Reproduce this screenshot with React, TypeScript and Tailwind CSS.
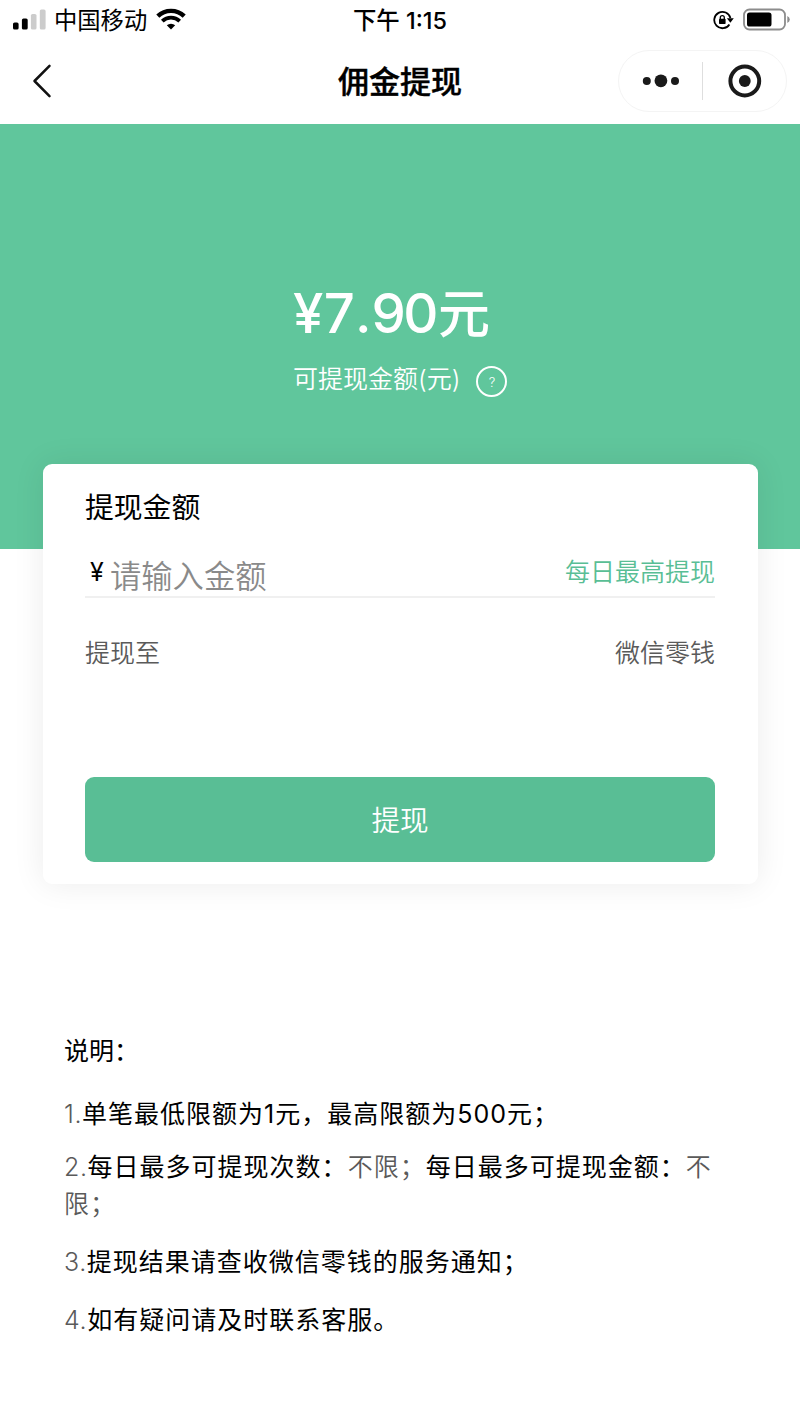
import React from 'react';

interface NotePart {
  text: string;
  muted?: boolean;
}

interface NoteData {
  index: string;
  parts: NotePart[];
  className: string;
}

const notes: NoteData[] = [
  {
    index: '1.',
    className: 'mt-[26px]',
    parts: [{ text: '单笔最低限额为1元，最高限额为500元；' }],
  },
  {
    index: '2.',
    className: 'mt-[16px]',
    parts: [
      { text: '每日最多可提现次数：' },
      { text: '不限；', muted: true },
      { text: '每日最多可提现金额：' },
      { text: '不限；', muted: true },
    ],
  },
  {
    index: '3.',
    className: 'mt-[21px]',
    parts: [{ text: '提现结果请查收微信零钱的服务通知；' }],
  },
  {
    index: '4.',
    className: 'mt-[21px]',
    parts: [{ text: '如有疑问请及时联系客服。' }],
  },
];

const StatusBar: React.FC = () => (
  <div className="grid h-10 grid-cols-3 items-center text-black">
    <div className="flex items-center pl-[12px]">
      <svg width="34" height="22" viewBox="0 0 34 22" className="shrink-0">
        <rect x="1" y="13.5" width="5.6" height="7" rx="1.6" fill="#000" />
        <rect x="9.9" y="9.5" width="5.8" height="11" rx="1.6" fill="#000" />
        <rect x="18.9" y="5" width="5.6" height="15.5" rx="1.6" fill="#ccc" />
        <rect x="27.8" y="0.5" width="5.8" height="20" rx="1.6" fill="#ccc" />
      </svg>
      <span className="ml-2 mt-[2px] text-[23.3px] leading-[38px]">中国移动</span>
      <svg width="30" height="24" viewBox="0 0 30 24" className="ml-[9px] shrink-0">
        <path d="M1.8 8.2 A19 19 0 0 1 28.2 8.2" fill="none" stroke="#000" strokeWidth="4.4" />
        <path d="M6.3 13.2 A12.6 12.6 0 0 1 23.7 13.2" fill="none" stroke="#000" strokeWidth="3.8" />
        <path d="M15 21.4 L10.8 17.2 A6.4 6.4 0 0 1 19.2 17.2 Z" fill="#000" />
      </svg>
    </div>
    <div className="mt-[2px] text-center text-[23.4px] font-medium leading-[38px]">下午 1:15</div>
    <div className="flex items-center justify-end pr-[9px]">
      <svg width="21" height="20" viewBox="0 0 21 20">
        <path d="M16.4 14.4 A8.2 8.2 0 1 1 17.4 8" fill="none" stroke="#000" strokeWidth="1.8" />
        <path d="M13.9 8.2 H20.8 L17.3 12.8 Z" fill="#000" />
        <rect x="6" y="8.8" width="6.6" height="5.2" rx="0.7" fill="#000" />
        <path d="M7.3 9 V7.6 A2 2 0 0 1 11.3 7.6 V9" fill="none" stroke="#000" strokeWidth="1.3" />
      </svg>
      <svg width="48" height="24" viewBox="0 0 48 24" className="ml-[9px]">
        <rect x="1" y="1.5" width="41" height="20" rx="5.5" fill="none" stroke="#8c8c8c" strokeWidth="1.8" />
        <rect x="4" y="4.5" width="24.5" height="14" rx="2.6" fill="#000" />
        <path d="M44.3 8.1 Q46.8 9.3 46.8 11.5 Q46.8 13.7 44.3 14.9 Z" fill="#8c8c8c" />
      </svg>
    </div>
  </div>
);

const NavBar: React.FC = () => (
  <div className="grid h-[84px] grid-cols-[180px_1fr_180px] items-center pb-[2px]">
    <svg width="20" height="34" viewBox="0 0 20 34" className="ml-8">
      <path d="M17.5 1.8 L2.5 17 L17.5 32.2" fill="none" stroke="#111" strokeWidth="2.5" strokeLinecap="round" strokeLinejoin="round" />
    </svg>
    <h1 className="pt-[2px] text-center text-[31px] font-medium leading-[80px] text-black [-webkit-text-stroke:0.4px_#000]">佣金提现</h1>
    <div className="-ml-[2px] flex h-[62px] w-[169px] items-center rounded-full border border-[#f4f4f4] bg-white">
      <svg width="83" height="38" viewBox="0 0 83 38">
        <circle cx="27.8" cy="19" r="4" fill="#1a1a1a" />
        <circle cx="41.9" cy="18.8" r="6.4" fill="#1a1a1a" />
        <circle cx="56" cy="19" r="4" fill="#1a1a1a" />
      </svg>
      <div className="h-[38px] w-px bg-[#dedede]" />
      <svg width="83" height="38" viewBox="0 0 83 38">
        <circle cx="41.8" cy="19" r="14.4" fill="none" stroke="#1a1a1a" strokeWidth="4" />
        <circle cx="41.8" cy="19" r="5.9" fill="#1a1a1a" />
      </svg>
    </div>
  </div>
);

const Balance: React.FC = () => (
  <section className="h-[424.5px] bg-[#60c69c] pl-[293px] pt-[155px] text-white">
    <div className="h-[68px] whitespace-nowrap text-[54.5px] font-medium leading-[68px] [font-kerning:none]">
      <span className="tracking-[0.5px]">¥</span>7.
      <span className="tracking-[-2.5px]">90</span>
      <span className="ml-[2px] text-[52px] leading-none">元</span>
    </div>
    <div className="mt-[14px] flex items-center text-[25px] font-[350] leading-[36px]">
      <span className="whitespace-nowrap">可提现金额(元)</span>
      <span className="ml-[16px] mt-[5px] flex h-[31px] w-[31px] items-center justify-center rounded-full border-2 border-white pt-[2px] text-[13px] leading-none">
        ?
      </span>
    </div>
  </section>
);

const WithdrawCard: React.FC = () => (
  <section className="relative mx-[42.5px] -mt-[85px] h-[420.5px] rounded-[9px] bg-white px-[42.5px] pt-[22px] shadow-[0_0_32px_rgba(0,0,0,0.08)]">
    <h2 className="text-[28.8px] leading-[44px] text-black">提现金额</h2>
    <div className="flex h-[68px] items-end justify-between border-b-2 border-[#f0f0f0]">
      <label className="flex items-end">
        <span className="ml-[5px] w-[20px] pb-[6px] text-[25px] leading-[36px] text-black">¥</span>
        <input
          type="text"
          placeholder="请输入金额"
          className="h-[36px] w-[240px] bg-transparent text-[31.3px] font-[350] text-black outline-none placeholder:text-[#8a8a8a]"
        />
      </label>
      <button className="pb-[6px] text-[25px] font-[350] leading-[36px] text-[#59be95]">每日最高提现</button>
    </div>
    <div className="mt-[37.5px] flex justify-between text-[25px] font-[350] leading-[36px] text-[#5a5a5a]">
      <span>提现至</span>
      <span>微信零钱</span>
    </div>
    <button className="mt-[106px] h-[85px] w-full rounded-[9px] bg-[#59be95] pt-[3px] text-[28.6px] font-[350] text-white">提现</button>
  </section>
);

const Notes: React.FC = () => (
  <section className="px-16 pt-[149px] text-[25px] leading-[37px] text-black">
    <p>说明：</p>
    {notes.map(note => (
      <p key={note.index} className={`tracking-[1px] ${note.className}`}>
        <span className="font-[350] tracking-[0.6px] text-[#5a5a5a]">{note.index}</span>
        {note.parts.map((part, i) => (
          <span key={i} className={part.muted ? 'font-[350] text-[#5a5a5a]' : ''}>{part.text}</span>
        ))}
      </p>
    ))}
  </section>
);

const App: React.FC = () => (
  <main lang="zh-CN" className="h-[1422px] w-[800px] overflow-hidden bg-white font-['Inter','Noto_Sans_CJK_SC',sans-serif]">
    <StatusBar />
    <NavBar />
    <Balance />
    <WithdrawCard />
    <Notes />
  </main>
);

export default App;
